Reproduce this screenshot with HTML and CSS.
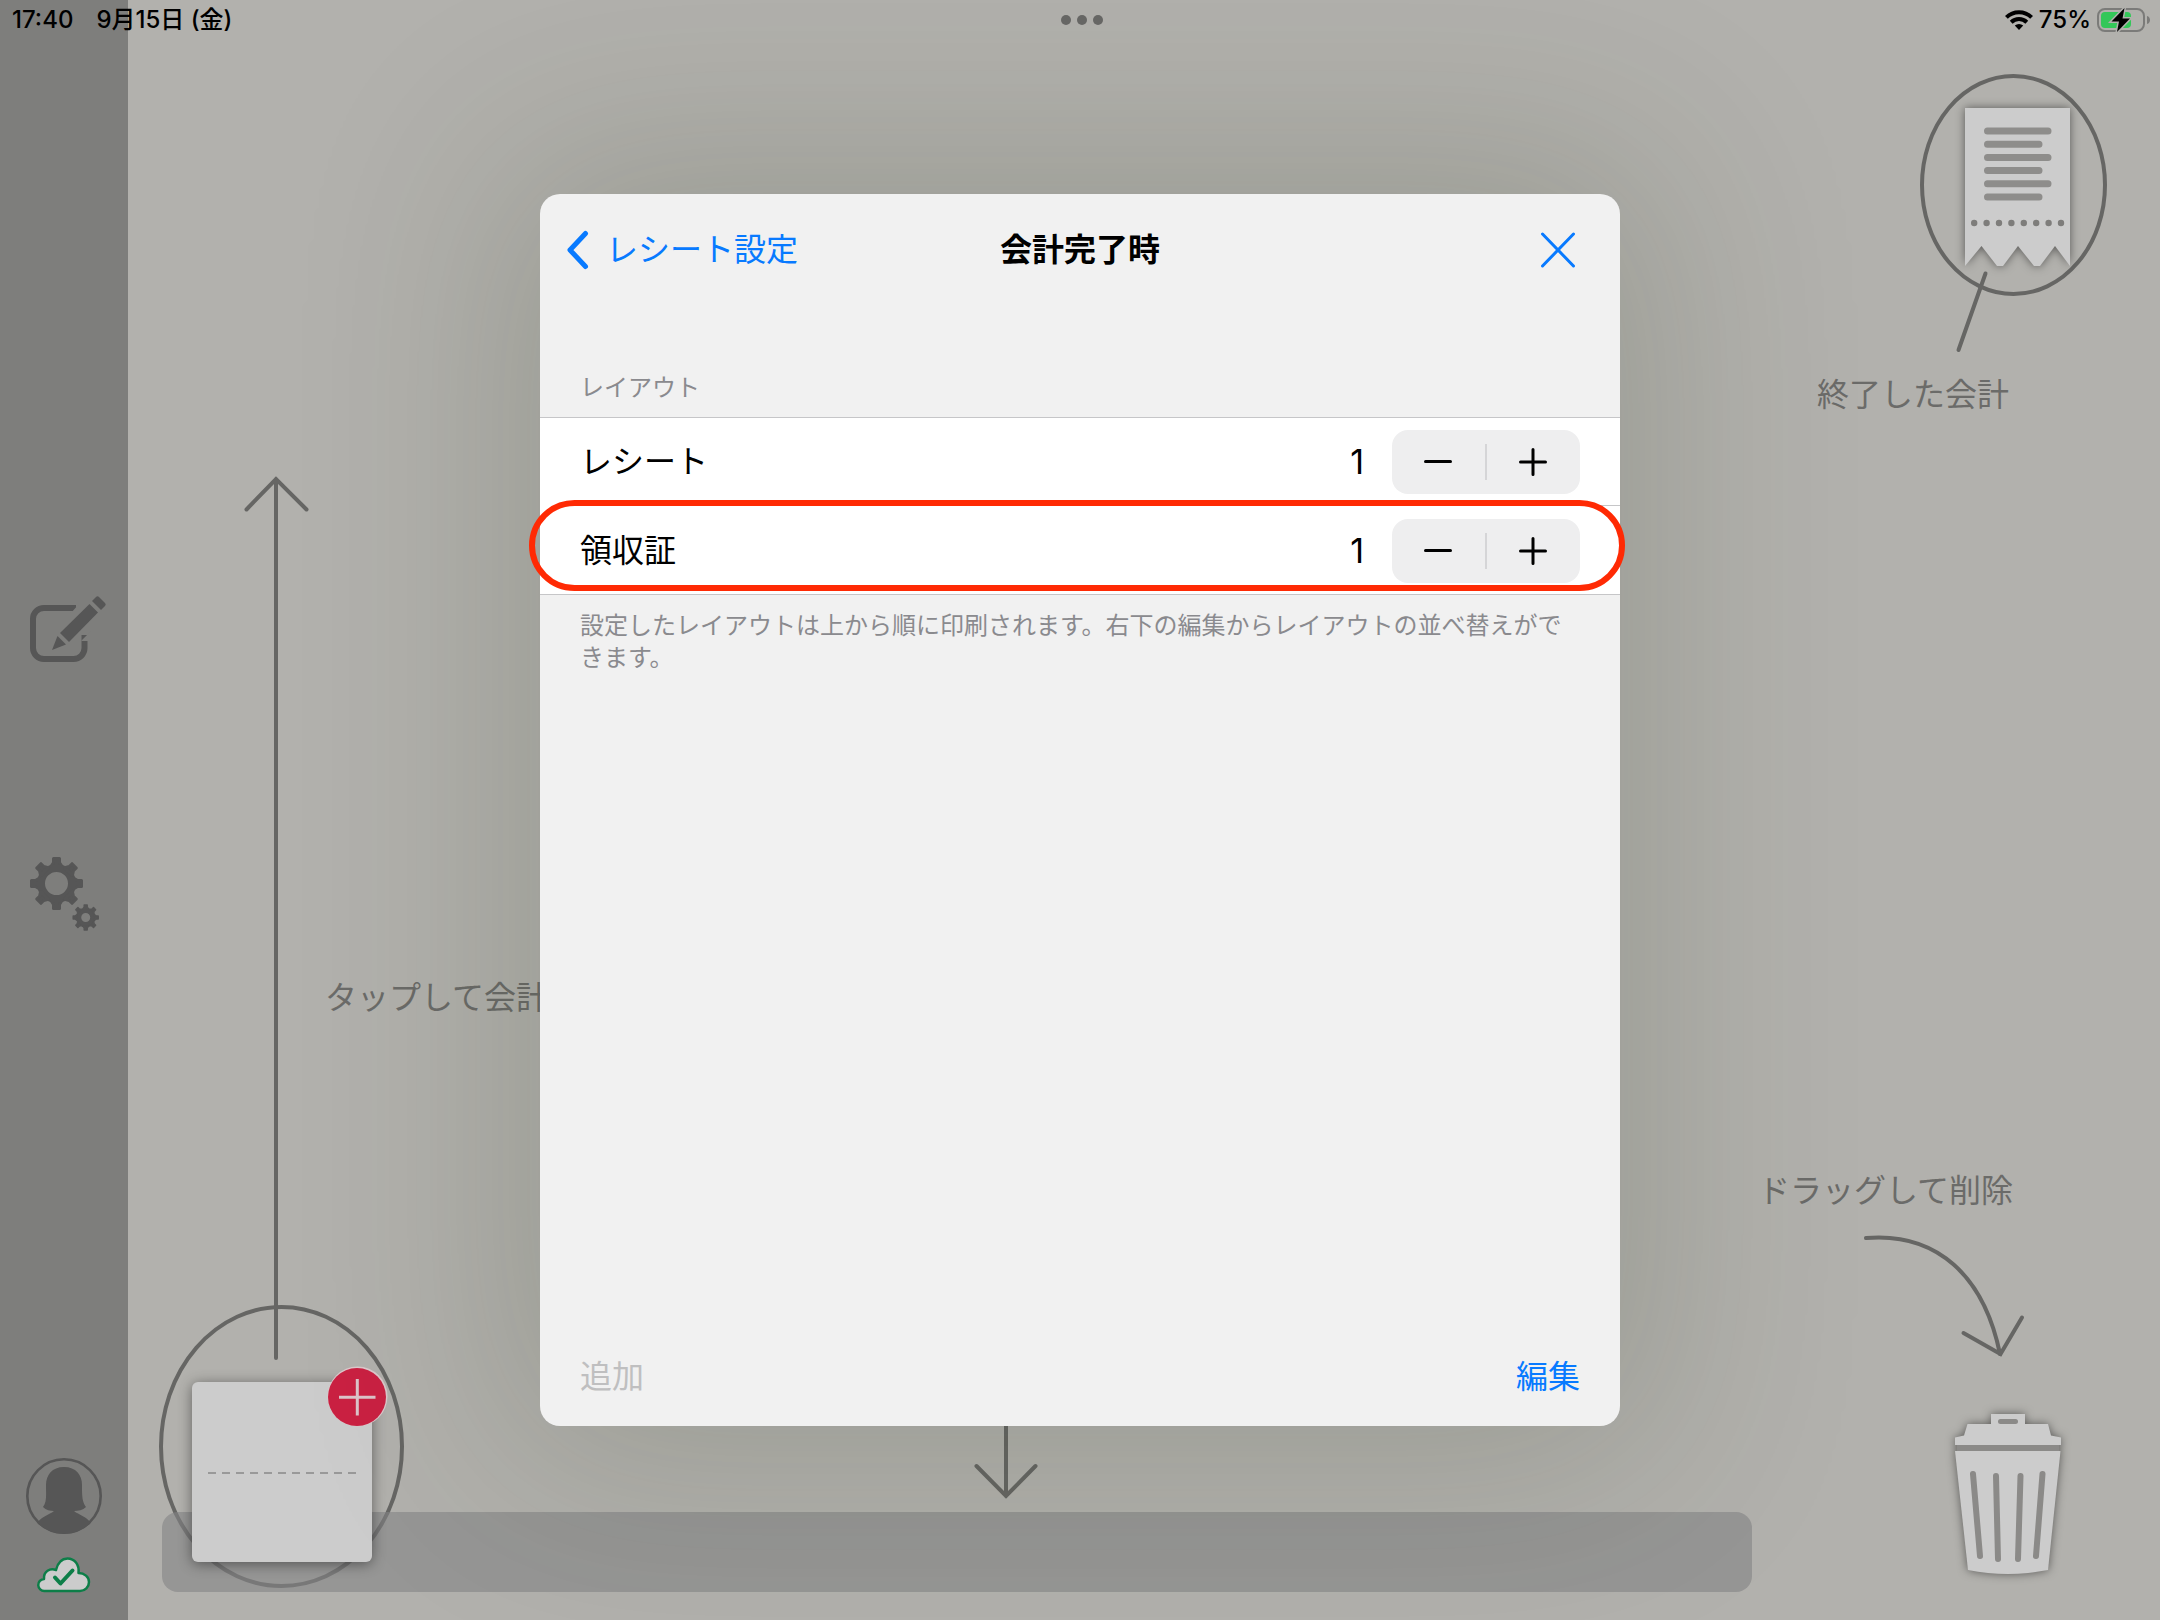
FILE: index.html
```html
<!DOCTYPE html>
<html lang="ja">
<head>
    <meta charset="UTF-8">
    <meta name="viewport" content="width=device-width, initial-scale=1.0">
    <title>会計完了時</title>
    <link rel="stylesheet" href="styles.css">
</head>
<body>
<header class="status-bar">
    <div class="status-left">
        <span>17:40</span>
        <span>9月15日 (金)</span>
    </div>
    <div class="status-dots"><i></i><i></i><i></i></div>
    <div class="status-right">
        <svg width="28" height="20" viewBox="0 0 28 20" fill="none" stroke="#000" stroke-width="4">
            <path d="M1.4 7.4a18 18 0 0 1 25.2 0"/>
            <path d="M6.2 12.2a11.2 11.2 0 0 1 15.6 0"/>
            <path d="M14 20l-4.2-4.4a6.2 6.2 0 0 1 8.4 0z" fill="#000" stroke="none"/>
        </svg>
        <span>75%</span>
        <svg width="54" height="28" viewBox="0 0 54 28">
            <rect x="1" y="3" width="46" height="22" rx="7" fill="none" stroke="#7b7b79" stroke-width="2"/>
            <path d="M50 10c4 1 4 7 0 8z" fill="#7b7b79"/>
            <rect x="4" y="6" width="30" height="16" rx="4" fill="#34c759"/>
            <path d="M27.500 2L14.500 15.500h7.500l-2 10.500 13-13.500h-7.500z" fill="#000" stroke="#b2b1ad" stroke-width="3" paint-order="stroke"/>
        </svg>
    </div>
</header>

<div class="app">
    <nav class="sidebar">
        <button class="side-button" aria-label="新規">
            <svg width="96" height="80" viewBox="16 590 96 80" fill="#565656">
                <path d="M76 608H44a11 11 0 0 0-11 11v29a11 11 0 0 0 11 11h29.500a11 11 0 0 0 11-11V635" fill="none" stroke="#565656" stroke-width="6"/>
                <path d="M79 604L70 614H92V630L81 641H90V604z" fill="#7e7e7c"/>
                <path d="M89.500 604l8.500 8.500-29 29.500-9-9z"/>
                <path d="M92 601l4-4q1.500-1.500 3 0l6 6q1.500 1.500 0 3l-4 4z"/>
                <path d="M57.500 636l8.500 8.500-14 5.500z"/>
            </svg>
        </button>
        <button class="side-button" aria-label="設定">
            <svg width="96" height="80" viewBox="16 853 96 80">
                <defs>
                    <g id="gear" fill="none" stroke="#565656">
                        <circle r="15.500" stroke-width="8"/>
                        <g fill="#565656" stroke-width="3" stroke-linejoin="round">
                            <path id="tooth" d="M-5.500-17L-3-21V-25H3V-21L5.500-17z"/>
                            <use href="#tooth" transform="rotate(45)"/>
                            <use href="#tooth" transform="rotate(90)"/>
                            <use href="#tooth" transform="rotate(135)"/>
                            <use href="#tooth" transform="rotate(180)"/>
                            <use href="#tooth" transform="rotate(225)"/>
                            <use href="#tooth" transform="rotate(270)"/>
                            <use href="#tooth" transform="rotate(315)"/>
                        </g>
                    </g>
                </defs>
                <use href="#gear" transform="translate(56.500 883.500)"/>
                <use href="#gear" transform="translate(85.700 917.500) scale(.5)"/>
                <circle cx="85.700" cy="917.500" r="6.500" fill="none" stroke="#565656" stroke-width="4"/>
            </svg>
        </button>
        <button class="side-button account" aria-label="アカウント">
            <svg width="80" height="80" viewBox="0 0 80 80">
                <clipPath id="face"><circle cx="40" cy="40" r="38"/></clipPath>
                <circle cx="40" cy="40" r="36.700" fill="none" stroke="#565656" stroke-width="2.600"/>
                <g fill="#565656" clip-path="url(#face)">
                    <path d="M40 11c-12 0-18 8-18 18 0 10 1 17-3 22 3 3 7 4 11 4-5 4-12 5-17 12v15h54V67c-5-7-12-8-17-12 4 0 9-1 12-4-4-5-4-12-4-22 0-10-6-18-18-18z"/>
                </g>
            </svg>
        </button>
        <svg width="56" height="40" viewBox="36 1554 56 40" fill="#ccc" stroke="#0d7e48" stroke-width="2.500" stroke-linejoin="round">
            <path d="M44.500 1591a6 6 0 0 1-.5-12c-.5-8 6-11 12-9 2-8 6-11.500 11.500-11.500 7 0 12 6 11 14.500 6 0 10.500 4 10.500 9s-4 9-9 9z"/>
            <path d="M55 1577.500l5.500 6 12-13" fill="none" stroke-width="4" stroke-linecap="round"/>
        </svg>
    </nav>

    <main class="floor">
        <!-- finished bills -->
        <svg class="receipt" width="200" height="310" viewBox="1910 60 200 310">
            <g class="line">
                <ellipse cx="2013.500" cy="185" rx="91.500" ry="109"/>
                <path d="M1985.500 273.500L1958.500 350"/>
            </g>
            <path class="paper" d="M1965 108H2070V266L2055 246 2040 266H2034L2018 246 2003 266H1997L1981.500 246 1965 266z"/>
            <g stroke="#8e8d8b" stroke-width="7" stroke-linecap="round">
                <path d="M1987.500 131H2048M1987.500 144.200H2039M1987.500 157.400H2048M1987.500 170.600H2039M1987.500 183.800H2048M1987.500 197H2039"/>
                <path d="M1974.200 223H2064" stroke="#7e7d7b" stroke-width="6.400" stroke-dasharray="0 12.400"/>
            </g>
        </svg>
        <p class="note note-finished">終了した会計</p>

        <!-- new bill -->
        <svg class="new-bill-arrow" width="260" height="1140" viewBox="150 460 260 1140">
            <g class="line">
                <path d="M276 1358V479M246.500 509.500L276 479 306.500 509.500"/>
                <ellipse cx="281.500" cy="1446.500" rx="120.500" ry="139.500"/>
            </g>
        </svg>
        <p class="note note-tap">タップして会計</p>

        <svg class="tray-arrow" width="80" height="120" viewBox="966 1390 80 120">
            <path class="line" d="M1006 1390V1496M976.500 1466L1006 1496 1035.500 1466"/>
        </svg>
        <div class="tray"></div>
        <button class="new-bill" aria-label="新しい会計">
            <svg class="dashes" width="148" height="2" viewBox="0 0 148 2">
                <path d="M0 1H148" stroke="#999" stroke-width="2" stroke-dasharray="8 6"/>
            </svg>
            <svg class="badge" width="64" height="64" viewBox="0 0 64 64">
                <circle cx="32.500" cy="31.500" r="30" fill="#dcc8cb"/>
                <circle cx="32" cy="32" r="29" fill="#ca2142"/>
                <path d="M14 32.300H50.500M32.300 14V50.500" stroke="#dcc4c9" stroke-width="3"/>
            </svg>
        </button>

        <!-- trash -->
        <p class="note note-drag">ドラッグして削除</p>
        <svg class="trash" width="240" height="380" viewBox="1840 1220 240 380">
            <g class="line">
                <path d="M1866 1238C1937 1232 1984 1276 2000 1354"/>
                <path d="M1963.500 1333L2000.500 1354 2022 1317.500"/>
            </g>
            <g class="paper">
                <path d="M1957 1444H2059V1452H1957z" fill="#8b8a88"/>
                <path d="M1991 1424V1414H2025V1424H2048L2051 1435.500 2061 1437.500V1445H1955V1437.500L1964 1435.500 1967.500 1424z"/>
                <path d="M1955 1451H2060.500L2048 1570Q2008 1578 1968 1570z"/>
            </g>
            <g stroke="#8b8a88" stroke-width="6" stroke-linecap="round">
                <path d="M2000.500 1421.500H2015.500" stroke-width="5"/>
                <path d="M1973 1474L1980 1556M1996 1476L1998 1559M2020.500 1476L2018 1559M2042.500 1474L2036 1556"/>
            </g>
        </svg>
    </main>
</div>

<div class="overlay">
    <section class="dialog" role="dialog" aria-labelledby="dialog-title">
        <header class="dialog-header">
            <button class="link-button back">
                <svg width="24" height="40" viewBox="0 0 24 40" fill="none" stroke="#087aff" stroke-width="5" stroke-linecap="round" stroke-linejoin="round">
                    <path d="M19.500 3.500L4 20 19.500 36.500"/>
                </svg>
                レシート設定
            </button>
            <h1 class="dialog-title" id="dialog-title">会計完了時</h1>
            <button class="link-button close" aria-label="閉じる">
                <svg width="36" height="36" viewBox="0 0 36 36" stroke="#087aff" stroke-width="3" stroke-linecap="round">
                    <path d="M2.500 2L33.500 34M33.500 2L2.500 34"/>
                </svg>
            </button>
        </header>

        <h2 class="group-title">レイアウト</h2>
        <ul class="layout-list">
            <li class="layout-row">
                <span class="layout-name">レシート</span>
                <output class="count">1</output>
                <div class="stepper">
                    <button aria-label="減らす"><svg width="28" height="28" viewBox="0 0 28 28"><path d="M1.500 13.500H26.500"/></svg></button>
                    <button aria-label="増やす"><svg width="28" height="28" viewBox="0 0 28 28"><path d="M1.500 14H26.500M14 1.500V26.500"/></svg></button>
                </div>
            </li>
            <li class="layout-row marked">
                <span class="layout-name">領収証</span>
                <output class="count">1</output>
                <div class="stepper">
                    <button aria-label="減らす"><svg width="28" height="28" viewBox="0 0 28 28"><path d="M1.500 13.500H26.500"/></svg></button>
                    <button aria-label="増やす"><svg width="28" height="28" viewBox="0 0 28 28"><path d="M1.500 14H26.500M14 1.500V26.500"/></svg></button>
                </div>
            </li>
        </ul>
        <p class="group-help">設定したレイアウトは上から順に印刷されます。右下の編集からレイアウトの並べ替えができます。</p>

        <footer class="dialog-footer">
            <button class="link-button" disabled>追加</button>
            <button class="link-button">編集</button>
        </footer>
    </section>
</div>
</body>
</html>
```
FILE: styles.css
```css
*, *::before, *::after {
    box-sizing: border-box;
}
body {
    margin: 0;
    height: 100vh;
    overflow: hidden;
    background-color: #b2b1ad;
    font-family: Inter, "Noto Sans CJK JP", sans-serif;
    font-size: 32px;
    line-height: 48px;
    color: #000;
}
h1, h2, p, ul {
    margin: 0;
    padding: 0;
}
button {
    padding: 0;
    border: none;
    background: none;
    font: inherit;
    cursor: pointer;
}
svg {
    display: block;
}

/* status bar */
.status-bar {
    position: absolute;
    top: 0;
    left: 0;
    right: 0;
    z-index: 1;
    display: grid;
    grid-template-columns: 1fr auto 1fr;
    align-items: center;
    height: 40px;
    padding: 0 9px 0 12px;
    font-size: 24px;
    font-weight: 500;
    line-height: 40px;
}
.status-left {
    display: flex;
    gap: 23px;
}
.status-dots {
    display: flex;
    gap: 6px;
}
.status-dots i {
    width: 10px;
    height: 10px;
    border-radius: 50%;
    background-color: #666664;
}
.status-right {
    display: flex;
    align-items: center;
    justify-content: flex-end;
    gap: 6px;
}

/* main screen */
.app {
    display: flex;
    height: 100%;
}
.sidebar {
    display: flex;
    flex-direction: column;
    align-items: center;
    gap: 18px;
    width: 128px;
    padding: 590px 0 26px;
    background-color: #7e7e7c;
}
.side-button + .side-button {
    margin-top: 165px;
}
.sidebar .account {
    margin-top: auto;
}
.floor {
    position: relative;
    flex: 1;
}
.floor > * {
    position: absolute;
}
.line {
    fill: none;
    stroke: #666664;
    stroke-width: 4;
    stroke-linecap: round;
}
.paper {
    fill: #ccc;
    filter: drop-shadow(0 0 5px rgba(0, 0, 0, 0.5));
}
.note {
    color: #6b6b69;
    white-space: nowrap;
}
.receipt {
    top: 60px;
    right: 50px;
}
.note-finished {
    top: 371px;
    right: 151px;
}
.new-bill-arrow {
    left: 22px;
    bottom: 20px;
}
.note-tap {
    left: 197px;
    bottom: 598px;
}
.tray-arrow {
    left: 838px;
    bottom: 110px;
}
.tray {
    left: 34px;
    right: 408px;
    bottom: 28px;
    height: 80px;
    border-radius: 16px;
    background-color: rgba(131, 131, 133, 0.6);
}
.new-bill {
    left: 64px;
    bottom: 58px;
    width: 180px;
    height: 180px;
    border-radius: 6px;
    background-color: #ccc;
    box-shadow: 0 2px 14px rgba(0, 0, 0, 0.45);
}
.dashes {
    margin: 2px auto 0;
}
.badge {
    position: absolute;
    top: -17px;
    right: -17px;
}
.note-drag {
    top: 1167px;
    right: 147px;
}
.trash {
    right: 80px;
    bottom: 20px;
}

/* dialog */
.overlay {
    position: absolute;
    inset: 0;
    display: flex;
    padding: 194px 25%;
}
.dialog {
    display: flex;
    flex: 1;
    flex-direction: column;
    border-radius: 20px;
    background-color: #f1f1f1;
    box-shadow: 0 0 210px 36px rgba(46, 56, 26, 0.18);
}
.dialog-header {
    display: grid;
    grid-template-columns: 1fr auto 1fr;
    align-items: center;
    height: 112px;
}
.dialog-title {
    font-size: 32px;
    font-weight: 700;
}
.link-button {
    color: #087aff;
}
.link-button:disabled {
    color: #bfbfc0;
}
.back {
    display: flex;
    align-items: center;
    gap: 16px;
    padding-left: 26px;
}
.close {
    justify-self: end;
    padding-right: 44px;
}
.group-title {
    padding: 66px 40px 13px;
    font-size: 24px;
    font-weight: 400;
    line-height: 32px;
    color: #8a8a8e;
}
.layout-list {
    border-top: 1px solid #c6c6c8;
    border-bottom: 1px solid #c6c6c8;
    background-color: #fff;
    list-style: none;
}
.layout-row {
    position: relative;
    display: flex;
    align-items: center;
    height: 88px;
    padding: 0 40px;
}
.layout-row + .layout-row {
    padding-top: 2px;
}
.layout-row + .layout-row::before {
    content: "";
    position: absolute;
    top: -1px;
    left: 40px;
    right: 0;
    height: 1px;
    background-color: #c6c6c8;
}
.layout-name {
    flex: 1;
}
.count {
    margin-right: 28px;
    font-size: 34px;
}
.stepper {
    display: flex;
    align-items: center;
    width: 188px;
    height: 64px;
    border-radius: 16px;
    background-color: #eeeeef;
}
.stepper button {
    display: flex;
    flex: 1;
    align-items: center;
    justify-content: center;
    height: 36px;
    padding-right: 2px;
}
.stepper button + button {
    border-left: 2px solid #d5d5d7;
}
.stepper path {
    stroke: #000;
    stroke-width: 3;
    stroke-linecap: round;
}
/* red outline around the row being explained */
.marked::after {
    content: "";
    position: absolute;
    top: -6px;
    left: -11px;
    right: -5px;
    height: 91px;
    border: 6px solid #ff2a04;
    border-radius: 46px;
    pointer-events: none;
}
.group-help {
    padding: 15px 40px;
    font-size: 24px;
    line-height: 32px;
    color: #8a8a8e;
}
.dialog-footer {
    display: flex;
    justify-content: space-between;
    margin-top: auto;
    padding: 0 40px 25px;
}
```
